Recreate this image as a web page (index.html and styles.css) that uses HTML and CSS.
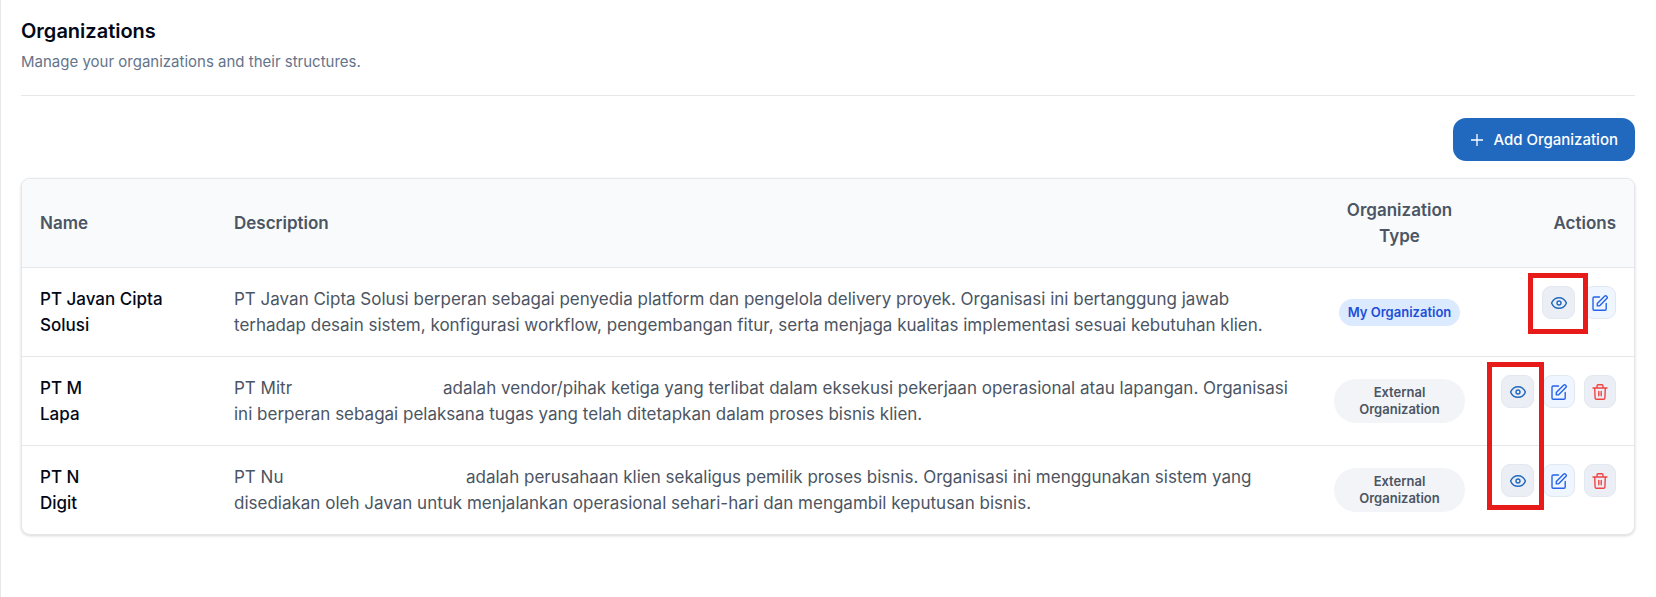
FILE: index.html
```html
<!DOCTYPE html>
<html lang="en">
<head>
  <meta charset="UTF-8">
  <meta name="viewport" content="width=device-width, initial-scale=1.0">
  <title>Organizations</title>
  <link rel="stylesheet" href="styles.css">
</head>
<body>
  <!-- icon set -->
  <svg class="icon-defs" aria-hidden="true">
    <symbol id="icon-eye" viewBox="0 0 16 16">
      <path d="M.6 8C2 4.700 4.800 2.700 8 2.700S14 4.700 15.400 8C14 11.300 11.200 13.300 8 13.300S2 11.300.6 8z"/>
      <circle cx="8" cy="8" r="2"/>
    </symbol>
    <symbol id="icon-edit" viewBox="0 0 16 16">
      <path d="M7.500 2H2.200A1.200 1.200 0 0 0 1 3.200V14a1.200 1.200 0 0 0 1.200 1.200H13A1.200 1.200 0 0 0 14.200 14V8.500"/>
      <path d="M5.300 10.900V8.600l7.500-7.500a1.100 1.100 0 0 1 1.600 0l.6.6a1.100 1.100 0 0 1 0 1.600l-7.600 7.600z"/>
    </symbol>
    <symbol id="icon-trash" viewBox="0 0 16 16">
      <path d="M1 4H15M5 4V2A1.200 1.200 0 0 1 6.200.8H9.800A1.200 1.200 0 0 1 11 2V4M2.700 4L3.100 14A1.300 1.300 0 0 0 4.400 15.200H11.600A1.300 1.300 0 0 0 12.900 14L13.300 4M6.800 7.400V11.800M9.200 7.400V11.800"/>
    </symbol>
  </svg>

  <main class="page">
    <header class="page-header">
      <h1>Organizations</h1>
      <p>Manage your organizations and their structures.</p>
    </header>

    <div class="toolbar">
      <button class="btn-add" type="button">
        <svg viewBox="0 0 12 12" aria-hidden="true"><path d="M6 0V12M0 6H12"/></svg>
        Add Organization
      </button>
    </div>

    <div class="table-card">
      <table>
        <colgroup>
          <col class="col-name">
          <col>
          <col class="col-type">
          <col class="col-actions">
        </colgroup>
        <thead>
          <tr>
            <th>Name</th>
            <th>Description</th>
            <th class="center">Organization Type</th>
            <th class="right">Actions</th>
          </tr>
        </thead>
        <tbody>
          <tr>
            <td class="name">PT Javan Cipta Solusi</td>
            <td>PT Javan Cipta Solusi berperan sebagai penyedia platform dan pengelola delivery proyek. Organisasi ini bertanggung jawab<br>terhadap desain sistem, konfigurasi workflow, pengembangan fitur, serta menjaga kualitas implementasi sesuai kebutuhan klien.</td>
            <td class="center type"><span class="badge badge-own">My Organization</span></td>
            <td>
              <div class="actions">
                <div class="marked">
                  <button class="btn-icon view" type="button" aria-label="View"><svg><use href="#icon-eye"/></svg></button>
                  <span class="marker"></span>
                </div>
                <button class="btn-icon edit" type="button" aria-label="Edit"><svg><use href="#icon-edit"/></svg></button>
              </div>
            </td>
          </tr>
          <tr>
            <td class="name">PT M<br>Lapa</td>
            <td><span class="short-name">PT Mitr</span>adalah vendor/pihak ketiga yang terlibat dalam eksekusi pekerjaan operasional atau lapangan. Organisasi<br>ini berperan sebagai pelaksana tugas yang telah ditetapkan dalam proses bisnis klien.</td>
            <td class="center type"><span class="badge">External Organization</span></td>
            <td>
              <div class="actions">
                <div class="marked">
                  <button class="btn-icon view" type="button" aria-label="View"><svg><use href="#icon-eye"/></svg></button>
                  <span class="marker marker-tall"></span>
                </div>
                <button class="btn-icon edit" type="button" aria-label="Edit"><svg><use href="#icon-edit"/></svg></button>
                <button class="btn-icon delete" type="button" aria-label="Delete"><svg><use href="#icon-trash"/></svg></button>
              </div>
            </td>
          </tr>
          <tr>
            <td class="name">PT N<br>Digit</td>
            <td><span class="short-name wide">PT Nu</span>adalah perusahaan klien sekaligus pemilik proses bisnis. Organisasi ini menggunakan sistem yang<br>disediakan oleh Javan untuk menjalankan operasional sehari-hari dan mengambil keputusan bisnis.</td>
            <td class="center type"><span class="badge">External Organization</span></td>
            <td>
              <div class="actions">
                <button class="btn-icon view" type="button" aria-label="View"><svg><use href="#icon-eye"/></svg></button>
                <button class="btn-icon edit" type="button" aria-label="Edit"><svg><use href="#icon-edit"/></svg></button>
                <button class="btn-icon delete" type="button" aria-label="Delete"><svg><use href="#icon-trash"/></svg></button>
              </div>
            </td>
          </tr>
        </tbody>
      </table>
    </div>
  </main>
</body>
</html>
```
FILE: styles.css
```css
* {margin:0; padding:0; box-sizing:border-box;}
body {
  min-height:100vh;
  font-family: Inter, "Liberation Sans", sans-serif;
  font-size:17px; line-height:26px;
  color:#4b5563; background:#fff;
  border-left:1px solid #e5e7eb;
}
button {font:inherit; cursor:pointer;}
.icon-defs {position:absolute; width:0; height:0;}
.page {padding:17px 21px 20px 20px;}

.page-header {
  padding-bottom:21px; margin-bottom:22px;
  border-bottom:1px solid #e5e7eb;
}
.page-header h1 {
  font-size:20px; line-height:28px; font-weight:600; color:#020817;
  margin-bottom:4px;
}
.page-header p {font-size:15px; line-height:25px; color:#64748b;}

.toolbar {display:flex; justify-content:flex-end; margin-bottom:17px;}
.btn-add {
  display:flex; align-items:center; gap:10px;
  height:43px; padding:0 17px 0 18px;
  border:0; border-radius:13px;
  background:#2169be; color:#fff;
  font-size:15px; font-weight:500;
}
.btn-add svg {width:12px; height:12px; fill:none; stroke:#fff; stroke-width:1.3;}

/* table */
.table-card {
  border:1px solid #e5e7eb; border-radius:9px;
  box-shadow:0 1px 3px rgba(0,0,0,.16);
  background:#fff;
}
table {width:100%; border-collapse:separate; border-spacing:0; table-layout:fixed;}
.col-name {width:194px;}
.col-type {width:167px;}
.col-actions {width:151px;}
th, td {padding:18px; text-align:left; vertical-align:top;}
th {
  font-weight:600; vertical-align:middle;
  background:#f9fafb; border-bottom:1px solid #e5e7eb;
}
th:first-child {border-top-left-radius:8px;}
th:last-child {border-top-right-radius:8px;}
tbody tr:not(:last-child) td {border-bottom:1px solid #e5e7eb;}
td {white-space:nowrap;}
.name {font-weight:500; color:#020817; white-space:normal;}
.center {text-align:center;}
.right {text-align:right;}

/* shortened names keep the room of the full one */
.short-name {display:inline-block; width:209px; vertical-align:top;}
.short-name.wide {width:232px;}

.type {vertical-align:middle; white-space:normal; line-height:0;}
.badge {
  display:inline-block; padding:5px 9px; border-radius:22px;
  background:#f3f4f8; color:#4b5563;
  font-size:13px; line-height:17px; font-weight:600;
}
.badge-own {background:#dbeafe; color:#1d4ed8;}

.actions {display:flex; justify-content:flex-end; gap:9px;}
.btn-icon {
  display:flex; align-items:center; justify-content:center;
  width:32px; height:33px;
  border:1px solid #e2e8f0; border-radius:9px;
  background:#ebeff5;
}
.btn-icon svg {width:16px; height:16px; fill:none; stroke:currentColor; stroke-width:1.4; stroke-linecap:round; stroke-linejoin:round; overflow:visible;}
.btn-icon.view {width:33px; color:#2169be;}
.btn-icon.edit {background:#eff6ff; color:#2563eb;}
.btn-icon.delete {color:#ef4444;}

.marked {position:relative;}
.marker {
  position:absolute; z-index:1; top:-13px; left:-14px;
  width:60px; height:61px;
  border:5px solid #e81b1b; pointer-events:none;
}
.marker-tall {width:57px; height:148px;}
```
